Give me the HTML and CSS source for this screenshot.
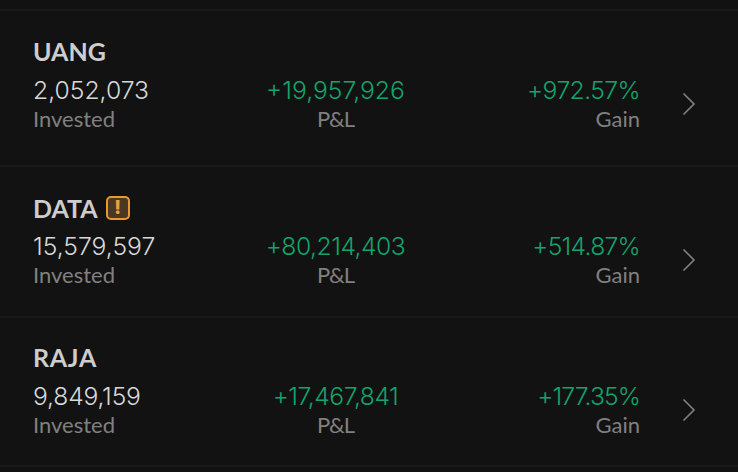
FILE: index.html
```html
<!DOCTYPE html>
<html lang="en">
<head>
<meta charset="utf-8">
<title>Holdings</title>
<link rel="stylesheet" href="styles.css">
</head>
<body>
<ul class="list">
  <li class="row r1">
    <div class="sym">UANG</div>
    <div class="line">
      <div class="cols">
        <div class="col left"><div class="val">2,052,073</div><div class="lab">Invested</div></div>
        <div class="col mid"><div class="val up">+19,957,926</div><div class="lab pl">P&amp;L</div></div>
        <div class="col right"><div class="val up pct">+972.57%</div><div class="lab">Gain</div></div>
      </div>
      <svg class="chev" width="14" height="24" viewBox="0 0 14 24"><path d="M1.5 1.5 L12 12 L1.5 22.5" fill="none" stroke="#808080" stroke-width="1.6"/></svg>
    </div>
  </li>
  <li class="row r2">
    <div class="sym">DATA <span class="warn">!</span></div>
    <div class="line">
      <div class="cols">
        <div class="col left"><div class="val">15,579,597</div><div class="lab">Invested</div></div>
        <div class="col mid"><div class="val up tight">+80,214,403</div><div class="lab pl">P&amp;L</div></div>
        <div class="col right"><div class="val up pct-mid">+514.87%</div><div class="lab">Gain</div></div>
      </div>
      <svg class="chev" width="14" height="24" viewBox="0 0 14 24"><path d="M1.5 1.5 L12 12 L1.5 22.5" fill="none" stroke="#808080" stroke-width="1.6"/></svg>
    </div>
  </li>
  <li class="row r3">
    <div class="sym wide">RAJA</div>
    <div class="line">
      <div class="cols">
        <div class="col left"><div class="val snug">9,849,159</div><div class="lab">Invested</div></div>
        <div class="col mid"><div class="val up tight">+17,467,841</div><div class="lab pl">P&amp;L</div></div>
        <div class="col right"><div class="val up pct-narrow">+177.35%</div><div class="lab">Gain</div></div>
      </div>
      <svg class="chev" width="14" height="24" viewBox="0 0 14 24"><path d="M1.5 1.5 L12 12 L1.5 22.5" fill="none" stroke="#808080" stroke-width="1.6"/></svg>
    </div>
  </li>
</ul>
</body>
</html>
```
FILE: styles.css
```css
html, body { margin: 0; padding: 0; background: #121212; }
body { width: 738px; height: 472px; overflow: hidden; font-family: "Lato", "Noto Sans", sans-serif; }
.list { list-style: none; margin: 0; padding: 9px 0 0; }
.row { display: flex; flex-direction: column; gap: 9px; padding: 25px 42px 32px 33px; border-top: 2px solid #191919; }
.r2 { padding-top: 26px; gap: 8px; padding-bottom: 27px; }
.r3 { padding-top: 24px; padding-bottom: 26px; border-bottom: 2px solid #191919; }
.sym { font-size: 25px; line-height: 30px; font-weight: 700; color: #cdcdcd; display: flex; align-items: center; gap: 8px; }
.wide { letter-spacing: 0.7px; }
.warn { width: 24px; height: 24px; box-sizing: border-box; background: #4a3825; border: 2px solid #e8982e; border-radius: 5px; color: #f0a03a; font-family: "Inter", sans-serif; font-size: 19px; font-weight: 800; line-height: 20px; text-align: center; }
.line { display: flex; align-items: center; }
.cols { flex: 1; display: grid; grid-template-columns: 1fr 1fr 1fr; }
.col { display: flex; flex-direction: column; }
.left { align-items: flex-start; }
.mid { align-items: center; padding-right: 2px; }
.right { align-items: flex-end; }
.val { font-family: "Inter", "Noto Sans", sans-serif; font-size: 24.7px; line-height: 30px; color: #d8d8d8; font-weight: 300; }
.up { color: #14a36d; }
.snug { letter-spacing: -0.2px; }
.tight { letter-spacing: -0.5px; }
.pct { letter-spacing: -0.6px; }
.pct-mid { letter-spacing: -0.75px; }
.pct-narrow { letter-spacing: -0.9px; }
.lab { font-size: 22px; line-height: 28px; color: #808080; }
.pl { letter-spacing: -1px; }
.chev { margin-left: 42px; flex: none; }
```
